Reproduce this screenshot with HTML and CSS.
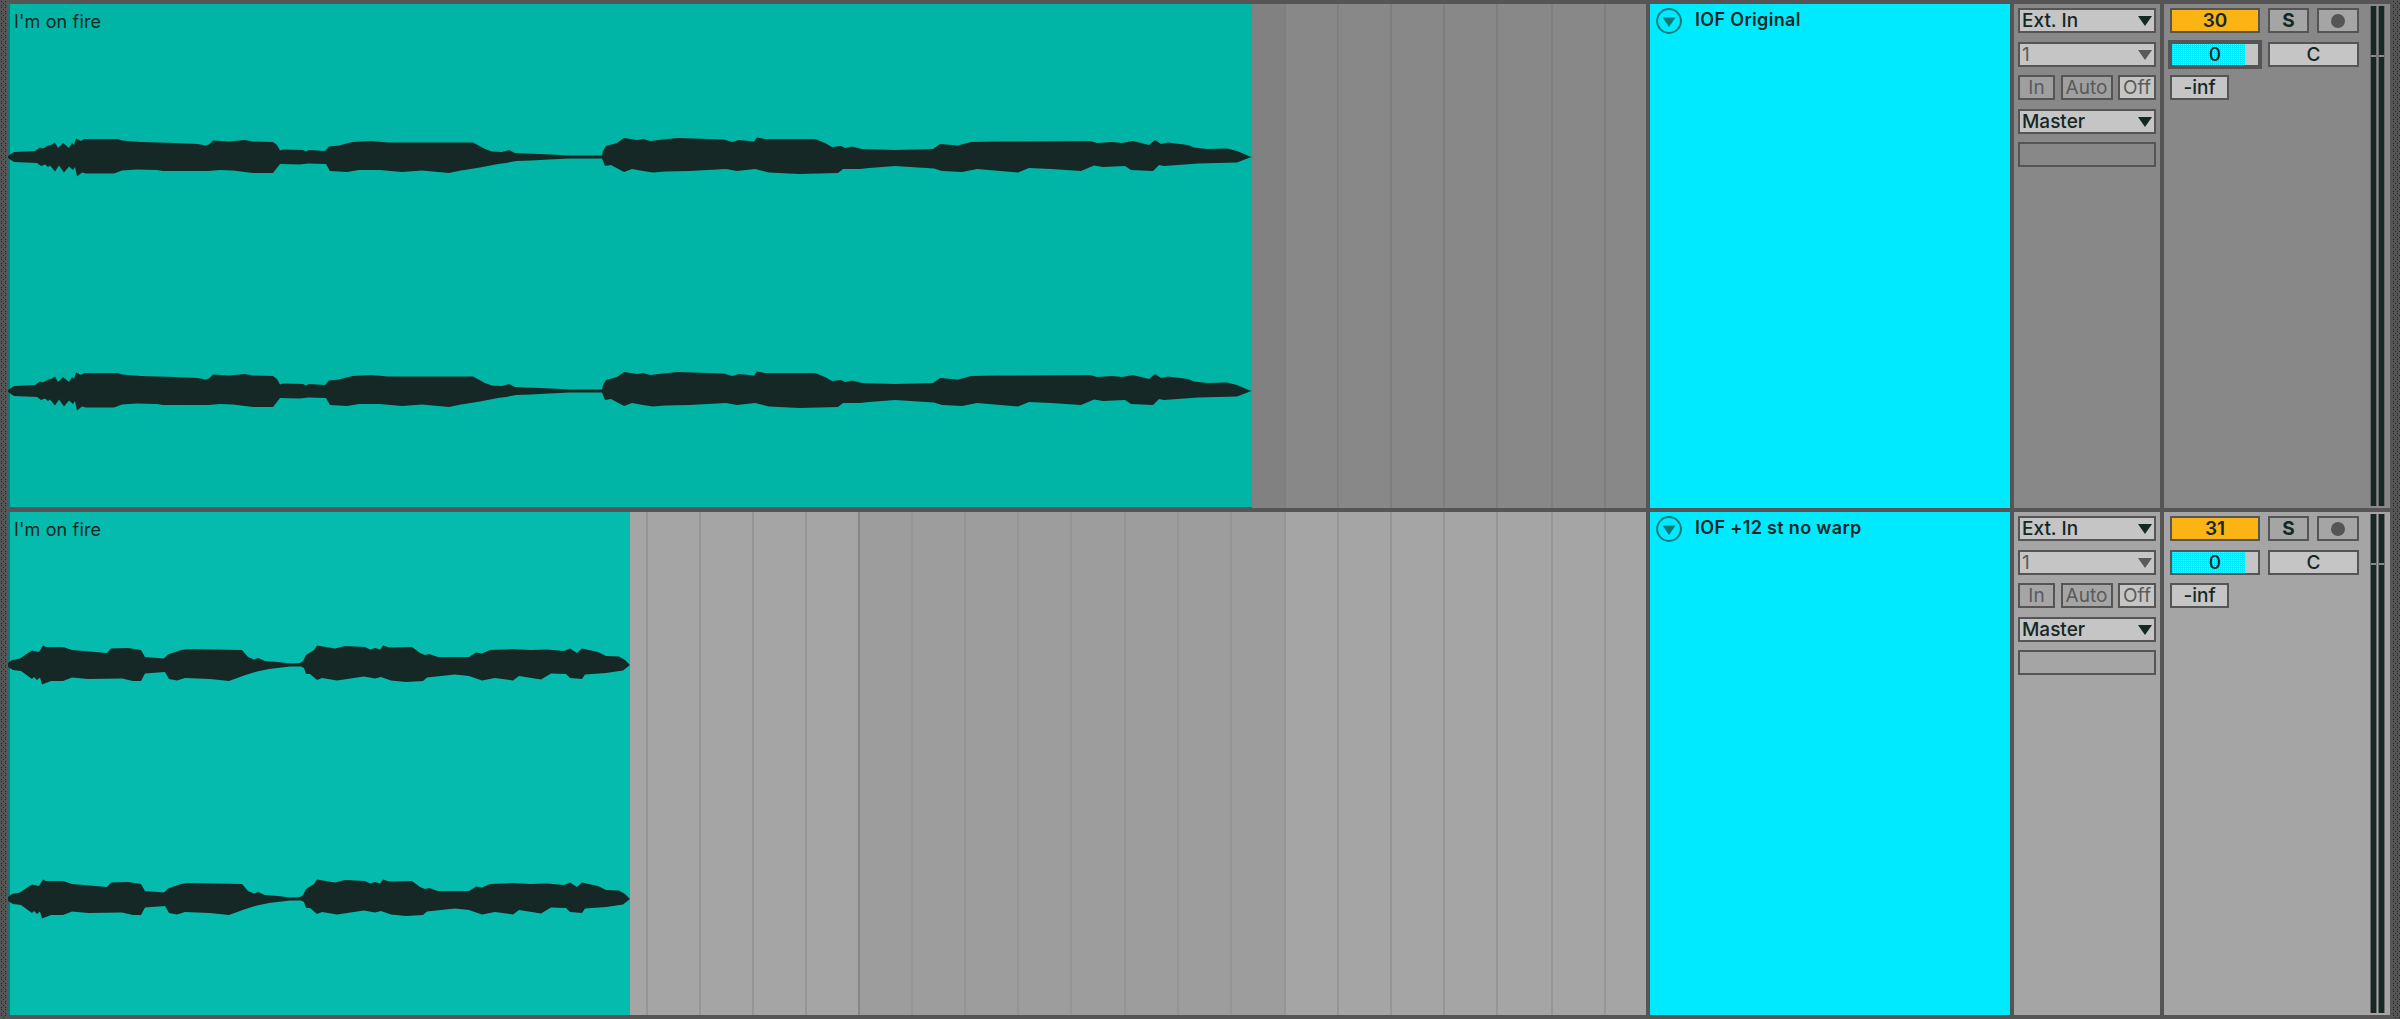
FILE: index.html
```
<!DOCTYPE html>
<html lang="en">
<head>
<meta charset="utf-8">
<title>Arrangement</title>
<link rel="stylesheet" href="styles.css">
</head>
<body>
<svg class="defs" width="0" height="0">
  <symbol id="wave-long" viewBox="8 -20 1244 40">
    <polygon transform="scale(1,-1)" points="8,0 8,1 14,5 35,6 40,9.5 43,8.5 48,11.5 51,12 55,14.5 58,9 63,14 69,9 72,14 74,12 76,18.5 81,16 84,18 118,18 122,16.5 141,15 175,14 198,13 205,11.5 209,12.5 213,16.5 229,15.5 245,17 253,15.5 273,15 277,12 280,6.5 283,7.5 303,7 306,5.5 309,7 325,6 329,10.5 339,11.5 352,15 371,16 388,14.5 402,14.5 473,14.5 485,8 492,5.5 502,5 509,7 515,4 551,2.5 570,1.5 602,1.5 603,6 606,11 617,14 624,19 637,17 643,18 650,16 663,17.5 678,19 724,17.5 732,15 739,17 754,15.5 757,19.5 765,18 815,18 825,14 832,10 841,11 845,9 852,10.5 862,8 895,7 933,8 940,13 958,11.5 971,15 997,15.5 1090,16 1097,14 1112,15 1122,14 1133,16 1149,12 1155,17 1161,13 1168,14.5 1188,12 1194,9.5 1207,8 1227,8.5 1237,6 1250,.5 1252,0"/>
    <polygon points="8,0 8,1 14,5 37,6 41,9 45,7.5 48,10 50,8.5 55,14.5 59,8.5 64,15.5 69,9.5 73,13 75,10 77,19.5 82,15.5 86,16.5 114,16.5 122,13.5 137,12.5 157,13 163,14 208,14 220,13 233,13.5 253,16 273,16 280,7 300,7.5 308,6.5 326,7 330,14 347,15 359,13 380,13 402,15 422,13.5 449,16 461,13.5 480,10.5 498,7 506,6 516,4 531,3.5 549,2.5 570,1.5 602,1.5 605,9 611,8 624,15 632,12 643,14 653,15.5 665,14.5 689,14 726,12 737,14 755,12 769,15.5 799,17 838,16 843,12 860,12 869,11 895,9 934,11.5 942,14 962,15 977,12 1018,15.5 1029,11 1051,12 1081,14 1094,8.5 1103,10 1125,9 1131,13 1153,14 1159,8 1164,9 1198,6.5 1237,5.5 1250,.5 1252,0"/>
  </symbol>
  <symbol id="wave-short" viewBox="8 -20 622 40">
    <polygon transform="scale(1,-1)" points="8,0 8,2 12,5 20,6.5 25,10 32,14.5 39,13 43,19.5 46,18 63,18 72,15 84,14 107,12 111,16.5 128,17 141,15 145,8 164,6.5 168,10.5 181,15 189,16 242,15 248,8 254,5.5 258,7 265,4 278,3 290,1.5 300,2 303,4 306,10 314,15 317,19.5 335,16.5 345,19 365,18 370,15.5 375,17 380,15.5 383,19.5 389,17.5 412,18 420,12 425,10 429,11 438,8 469,8 476,12.5 482,11.5 490,15 513,16 530,15 547,15.5 564,14 570,16.5 577,12 582,16.5 598,13 606,9 619,8.5 625,5 630,0"/>
    <polygon points="8,0 8,2 13,5 21,6 32,14 34,12 37,15 40,12.5 42,19.5 51,16 63,16 72,12.5 88,14 122,13.5 133,16 141,16 145,8.5 165,7 169,14 177,15.5 185,13 210,14 229,16 244,10.5 257,6.5 269,4 290,1.5 301,1.5 304,3 306,9 310,9 317,15 322,13 337,15.5 364,11.5 375,13.5 381,12 391,15.5 406,17 423,16 427,12.5 455,9.5 469,11 482,15.5 495,13 513,15.5 519,11 541,14.5 551,8.5 566,9 570,13 582,14 585,9.5 606,8 623,5.5 630,0"/>
  </symbol>
  <symbol id="arrow" viewBox="0 0 14 10"><polygon points="0,0 14,0 7,10"/></symbol>
  <symbol id="fold" viewBox="0 0 26 26">
    <circle cx="13" cy="13" r="11.9" fill="none" stroke="#0b7a78" stroke-width="2"/>
    <polygon points="6.5,9.5 19.5,9.5 13,19" fill="#0b7a78"/>
  </symbol>
</svg>

<main class="tracks">
  <div class="gutter gutter-left"></div>

  <section class="track track-a">
    <div class="lane">
      <article class="clip clip-long">
        <h2 class="clip-name">I'm on fire</h2>
        <svg class="wave"><use href="#wave-long"/></svg>
        <svg class="wave"><use href="#wave-long"/></svg>
      </article>
      <div class="bars bars-a"><i class="alt"></i><i></i><i></i><i></i><i></i><i></i><i></i><i></i></div>
    </div>
    <header class="title">
      <svg class="fold"><use href="#fold"/></svg>
      <h1 class="name">IOF Original</h1>
    </header>
    <div class="io">
      <div class="box select">Ext. In<svg class="arrow"><use href="#arrow"/></svg></div>
      <div class="box select dim">1<svg class="arrow"><use href="#arrow"/></svg></div>
      <div class="monitor">
        <span class="box off">In</span><span class="box off">Auto</span><span class="box dim">Off</span>
      </div>
      <div class="box select">Master<svg class="arrow"><use href="#arrow"/></svg></div>
      <div class="box empty"></div>
    </div>
    <div class="mixer">
      <div class="controls">
        <div class="box number">30</div>
        <div class="box solo">S</div>
        <div class="box arm"><span class="dot"></span></div>
        <div class="box volume focus">0</div>
        <div class="box pan">C</div>
        <div class="box peak">-inf</div>
      </div>
      <div class="meters"><span class="meter"></span><span class="meter"></span></div>
    </div>
  </section>

  <section class="track track-b">
    <div class="lane">
      <article class="clip clip-short">
        <h2 class="clip-name">I'm on fire</h2>
        <svg class="wave"><use href="#wave-short"/></svg>
        <svg class="wave"><use href="#wave-short"/></svg>
      </article>
      <div class="bars bars-b"><i></i><i></i><i></i><i></i><i class="strong"></i><i class="alt"></i><i class="alt"></i><i class="alt"></i><i class="alt"></i><i class="alt"></i><i class="alt"></i><i class="alt"></i><i class="alt"></i><i></i><i></i><i></i><i></i><i></i><i></i><i></i></div>
    </div>
    <header class="title">
      <svg class="fold"><use href="#fold"/></svg>
      <h1 class="name">IOF +12 st no warp</h1>
    </header>
    <div class="io">
      <div class="box select">Ext. In<svg class="arrow"><use href="#arrow"/></svg></div>
      <div class="box select dim">1<svg class="arrow"><use href="#arrow"/></svg></div>
      <div class="monitor">
        <span class="box off">In</span><span class="box off">Auto</span><span class="box dim">Off</span>
      </div>
      <div class="box select">Master<svg class="arrow"><use href="#arrow"/></svg></div>
      <div class="box empty"></div>
    </div>
    <div class="mixer">
      <div class="controls">
        <div class="box number">31</div>
        <div class="box solo">S</div>
        <div class="box arm"><span class="dot"></span></div>
        <div class="box volume">0</div>
        <div class="box pan">C</div>
        <div class="box peak">-inf</div>
      </div>
      <div class="meters"><span class="meter"></span><span class="meter"></span></div>
    </div>
  </section>

  <div class="gutter gutter-right"></div>
</main>
</body>
</html>
```
FILE: styles.css
```
* { box-sizing: border-box; }

body {
  margin: 0;
  background: #555;
  color: #152825;
  font: 500 19px/22px Inter, "Liberation Sans", sans-serif;
  overflow: hidden;
}

h1, h2 { margin: 0; }
svg { display: block; flex: none; }
.defs { position: absolute; }

.tracks {
  display: grid;
  grid-template-columns: 8px 2382px 10px;
  grid-template-rows: 504px 503px;
  row-gap: 4px;
  padding: 4px 0;
  width: 2400px;
  height: 1019px;
}

.gutter {
  grid-row: 1 / 3;
  margin: -4px 0;
  background-image:
    radial-gradient(circle at 1.5px 1.5px, #182927 0.8px, transparent 0.9px),
    radial-gradient(circle at 3.5px 3.5px, #182927 0.8px, transparent 0.9px),
    radial-gradient(circle at 1.5px 5.5px, #182927 0.8px, transparent 0.9px);
  background-size: 4px 6px;
}
.gutter-left { grid-column: 1; margin-right: 2px; }
.gutter-right { grid-column: 3; margin-left: 2px; }

.track {
  grid-column: 2;
  display: grid;
  grid-template-columns: 1638px 360px 146px 226px;
  column-gap: 4px;
}
.track-a { --panel: #888; --alt: #818181; --line: #7e7e7e; --clip: #00b4a6; }
.track-b { --panel: #a5a5a5; --alt: #9d9d9d; --line: #959595; --clip: #05bbad; }

.lane { display: flex; background: var(--panel); }

.clip {
  flex: none;
  display: flex;
  flex-direction: column;
  background: var(--clip);
  border-bottom: 1px solid #19756d;
  box-shadow: inset 2px 0 #19756d;
}
.clip-long { width: 1244px; }
.clip-short { width: 622px; border-bottom: 0; }

.clip-name {
  height: 36px;
  margin-bottom: 96.5px;
  padding: 7px 0 0 6px;
  font-size: 18px;
  font-weight: 400;
  letter-spacing: 0.15px;
}
.wave { width: 100%; height: 40px; fill: #152825; }
.wave + .wave { margin-top: 194px; }

.bars { flex: 1; display: grid; }
.bars i { border-right: 2px solid var(--line); }
.bars .alt { background: var(--alt); }
.bars .strong { border-color: #878787; }
.bars i:last-child { border-right: 0; }
.bars-a { grid-template-columns: 34px 53px 53px 53px 53px 55px 53px 1fr; }
.bars-b { grid-template-columns: 18px 53px 53px 53px 53px 53px 53px 53px 53px 54px 53px 53px 54px 53px 53px 53px 53px 55px 53px 1fr; }

.title {
  display: flex;
  align-items: flex-start;
  gap: 13px;
  padding: 4px 6px;
  background: #00eaff;
}
.fold { width: 26px; height: 26px; }
.name {
  padding-top: 1px;
  font-size: 18px;
  font-weight: 600;
  letter-spacing: 0.33px;
}

.io {
  display: grid;
  grid-auto-rows: 25px;
  align-content: start;
  gap: 8.5px;
  padding: 4px;
  background: var(--panel);
}

.box {
  display: flex;
  align-items: center;
  justify-content: center;
  height: 25px;
  padding-top: 1px;
  border: 2px solid #555;
  background: #c5c5c5;
  white-space: nowrap;
}
.select { justify-content: space-between; padding: 1px 2px 0 2px; }
.dim, .off { color: #5a5a5a; font-weight: 400; }
.off { background: #a5a5a5; }
.track-a .off { background: #9f9f9f; }
.empty { background: none; }
.arrow { width: 14px; height: 10px; fill: currentColor; }
.monitor { display: grid; grid-template-columns: 37px 52px 38px; justify-content: space-between; }

.mixer { display: flex; justify-content: space-between; padding: 0 5px 0 6px; background: var(--panel); }
.controls {
  display: grid;
  grid-template-columns: 90px 41px 42px;
  grid-auto-rows: 25px;
  align-content: start;
  gap: 8.5px 8px;
  padding-top: 4px;
}
.number { background: #fcb415; font-weight: 600; }
.solo { background: #a5a5a5; font-weight: 700; }
.arm { padding-top: 0; background: #a5a5a5; }
.dot { width: 14px; height: 14px; border-radius: 50%; background: #555; }
.volume {
  background:
    linear-gradient(90deg, transparent 73px, #c5c5c5 73px),
    conic-gradient(#c5c5c5 25%, #00eaff 0) 0 0 / 2px 2px;
}
.focus { box-shadow: 0 0 0 2px #555; }
.pan { grid-column: 2 / 4; }
.peak { width: 59px; }

.meters { display: flex; gap: 1px; padding: 2px 0; }
.meter {
  width: 7px;
  border: 1px solid #6a6a6a;
  border-width: 0 1px;
  background: linear-gradient(#152825 49px, #888 49px, #888 51px, #152825 51px);
}
```
